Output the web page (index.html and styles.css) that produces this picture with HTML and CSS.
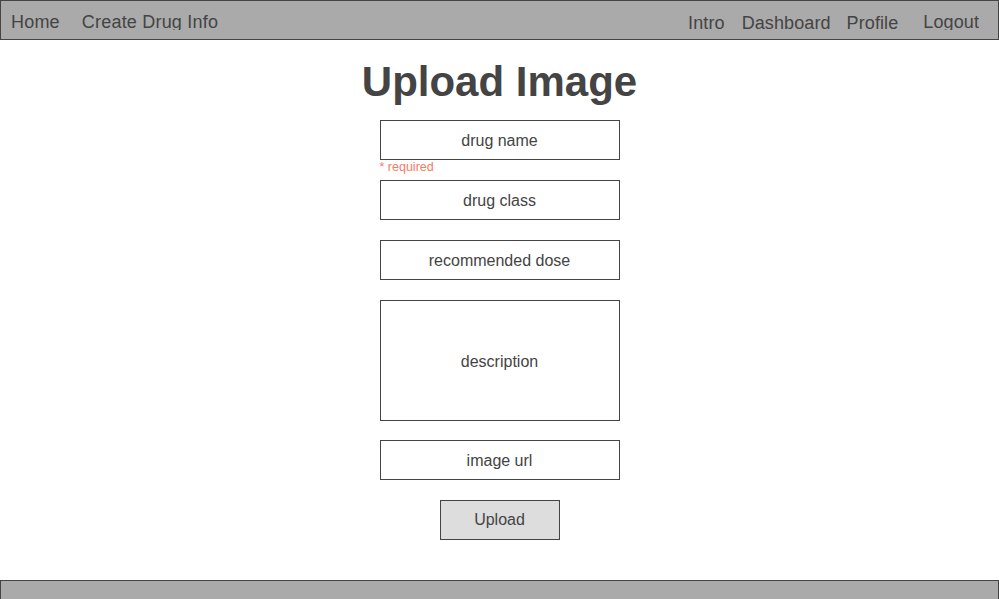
FILE: index.html
```html
<!DOCTYPE html>
<html lang="en">
<head>
  <meta charset="UTF-8">
  <title>Upload Image</title>
  <link rel="stylesheet" href="styles.css">
</head>
<body>

  <nav class="navbar">
    <div class="nav-left">
      <a class="nav-link home" href="#">Home</a>
      <a class="nav-link create" href="#">Create Drug Info</a>
    </div>
    <div class="nav-right">
      <a class="nav-link low intro" href="#">Intro</a>
      <a class="nav-link low dash" href="#">Dashboard</a>
      <a class="nav-link low profile" href="#">Profile</a>
      <a class="nav-link logout" href="#">Logout</a>
    </div>
  </nav>

  <h1 class="title">Upload Image</h1>

  <form class="upload-form">
    <input type="text" class="field" placeholder="drug name">
    <div class="required">* required</div>
    <input type="text" class="field" placeholder="drug class">
    <input type="text" class="field" placeholder="recommended dose">
    <textarea class="field desc" placeholder="description"></textarea>
    <input type="text" class="field" placeholder="image url">
    <button type="button" class="upload-btn">Upload</button>
  </form>

  <div class="footer"></div>

</body>
</html>
```

FILE: styles.css
```css
body {
  margin: 0;
  padding: 0;
  font-family: "Liberation Sans", Arial, sans-serif;
  color: #444;
  background: #fff;
}

.navbar {
  display: flex;
  justify-content: space-between;
  height: 40px;
  box-sizing: border-box;
  background: #aaa;
  border: 1px solid #444;
  padding: 11px 19px 0 10px;
}

.nav-left, .nav-right {
  display: flex;
  align-items: flex-start;
}

.nav-link {
  display: block;
  height: 18px;
  overflow: hidden;
  font-size: 18px;
  line-height: 20px;
  letter-spacing: 0.2px;
  color: #444;
  text-decoration: none;
}

.nav-right .nav-link {
  letter-spacing: 0.1px;
}

.nav-link.low {
  margin-top: 1px;
}

.create { margin-left: 22px; }
.dash { margin-left: 17px; }
.profile { margin-left: 16px; }
.logout { margin-left: 25px; }

.title {
  margin: 0;
  height: 80px;
  line-height: 84px;
  font-size: 42px;
  font-weight: bold;
  text-align: center;
  color: #444;
}

.upload-form {
  display: flex;
  flex-direction: column;
  align-items: center;
  width: 240px;
  margin: 0 auto;
}

.field {
  display: block;
  width: 240px;
  height: 40px;
  box-sizing: border-box;
  margin: 0 0 20px 0;
  padding: 1px 8px 0;
  border: 1px solid #444;
  border-radius: 0;
  background: #fff;
  font-family: "Liberation Sans", Arial, sans-serif;
  font-size: 16px;
  color: #444;
  text-align: center;
  outline: none;
}

.field::placeholder {
  color: #444;
  opacity: 1;
}

.field:first-child {
  margin-bottom: 0;
}

.required {
  align-self: flex-start;
  height: 20px;
  font-size: 12.5px;
  line-height: 14px;
  color: #f87a66;
}

.desc {
  height: 121px;
  margin-bottom: 19px;
  resize: none;
  padding-top: 52px;
  line-height: 18px;
}

.upload-btn {
  width: 120px;
  height: 40px;
  box-sizing: border-box;
  padding-top: 1px;
  background: #ddd;
  border: 1px solid #444;
  border-radius: 0;
  font-family: "Liberation Sans", Arial, sans-serif;
  font-size: 16px;
  color: #444;
  cursor: pointer;
}

.footer {
  margin-top: 40px;
  height: 30px;
  background: #aaa;
  border: 1px solid #444;
  border-bottom: none;
}
```
